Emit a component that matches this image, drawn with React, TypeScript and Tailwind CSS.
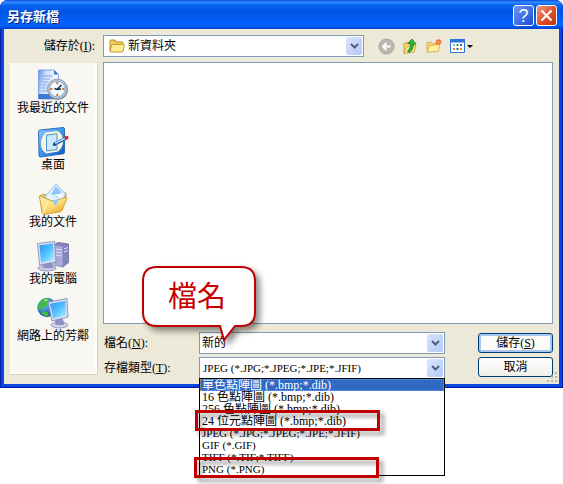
import { useState, type ReactNode } from "react";

const FILE_TYPES = [
  "單色點陣圖 (*.bmp;*.dib)",
  "16 色點陣圖 (*.bmp;*.dib)",
  "256 色點陣圖 (*.bmp;*.dib)",
  "24 位元點陣圖 (*.bmp;*.dib)",
  "JPEG (*.JPG;*.JPEG;*.JPE;*.JFIF)",
  "GIF (*.GIF)",
  "TIFF (*.TIF;*.TIFF)",
  "PNG (*.PNG)",
];

function RecentIcon() {
  return (
    <svg width="32" height="32" viewBox="0 0 32 32" aria-hidden="true">
      <defs>
        <linearGradient id="page" x1="0" y1="0" x2="1" y2="0.3">
          <stop offset="0" stopColor="#5f8fe8" />
          <stop offset="0.35" stopColor="#c9dcfb" />
          <stop offset="1" stopColor="#ffffff" />
        </linearGradient>
      </defs>
      <path d="M1.5 1H17l4.500 4.500V30H1.5z" fill="url(#page)" stroke="#6d96dc" strokeWidth="0.8" />
      <path d="M1.500 25h20v5h-20z" fill="#4478d6" />
      <path d="M17 1v4.500h4.500z" fill="#3f73cf" />
      <path d="M5 7h11M5 10h8M5 13h6M5 16h5M5 19h4M5 22h5" stroke="#86a9e2" />
      <circle cx="20.8" cy="20.8" r="10.2" fill="#7d8790" />
      <circle cx="20.3" cy="20" r="10" fill="#b6c2cc" stroke="#8797a5" strokeWidth="0.8" />
      <circle cx="20.3" cy="20" r="7.8" fill="#eefaff" stroke="#7fa6c2" strokeWidth="0.8" />
      <path d="M20.300 13v2.200M20.300 24.800V27M13.200 20h2.200M25.200 20h2.200" stroke="#f0642c" strokeWidth="1.800" />
      <path d="M24.500 16l-4.500 4.500M17.500 19.500l2.500 1 4-.5" fill="none" stroke="#12324f" strokeWidth="1.500" />
    </svg>
  );
}

function DesktopIcon() {
  return (
    <svg width="32" height="32" viewBox="0 0 32 32" aria-hidden="true">
      <defs>
        <linearGradient id="desk" x1="0" y1="0" x2="1" y2="1">
          <stop offset="0" stopColor="#8fcbff" />
          <stop offset="0.5" stopColor="#3f93ee" />
          <stop offset="1" stopColor="#0e55b8" />
        </linearGradient>
      </defs>
      <path d="M1.500 5.500q0-1.300 1.300-1.500L26 1.500q1.500 0 1.500 1.300v23.500q0 1.300-1.300 1.500L3.500 31Q2 31 2 29.500z" fill="url(#desk)" stroke="#1356b0" strokeWidth="0.8" />
      <path d="M8.500 6.500L20 5q5.500 2 6 9t-5 11.500L9.500 27.500Q4.500 25 4 18.500T8.500 6.500z" fill="#fdf6d2" />
      <path d="M9.500 9l10.500-1.300v15.800L9.500 25z" fill="#cfe9ff" stroke="#4a95e0" />
      <path d="M17 18.500l11.500-6" stroke="#2b6fbd" strokeWidth="3.200" />
      <path d="M18 17.300l10-5" stroke="#b7e2ff" strokeWidth="1.300" />
      <path d="M17 16l-1.500 3.800 3.500-.3z" fill="#153b72" />
      <circle cx="29.500" cy="11.800" r="2" fill="#d0301f" />
    </svg>
  );
}

function DocumentsIcon() {
  return (
    <svg width="32" height="32" viewBox="0 0 32 32" aria-hidden="true">
      <defs>
        <linearGradient id="docs" x1="0" y1="0" x2="0.7" y2="1">
          <stop offset="0" stopColor="#fff6b8" />
          <stop offset="0.6" stopColor="#fbdb73" />
          <stop offset="1" stopColor="#e5a932" />
        </linearGradient>
      </defs>
      <path d="M2.500 13l4-2 3 1.500L29 10v8L5.500 30z" fill="#f1cb60" stroke="#c18d27" strokeWidth="0.8" />
      <path d="M19 .8L28.500 11l-5 12-16-8.500z" fill="#e3f2ff" stroke="#78afe6" strokeWidth="0.8" />
      <path d="M19 3l5.500 6-3.500 6-7-4z" fill="#8fc5f8" />
      <path d="M16 12l9-1.500-1.500 4z" fill="#ffffff" />
      <path d="M2.500 13L11 16.500l5 1.500 12.800-3.500q1.200 0 .9 1.200L25 27.500q-.5 1-1.500 1.200L7 31.500q-1.500 0-2-1.500z" fill="url(#docs)" stroke="#cf982c" strokeWidth="0.8" />
      <path d="M15 17.700l7.500-2-4 7.500z" fill="#8fcdf6" />
      <path d="M6 30.500l5-13" stroke="#fff7cb" />
    </svg>
  );
}

function ComputerIcon() {
  return (
    <svg width="34" height="32" viewBox="0 0 34 32" aria-hidden="true">
      <defs>
        <linearGradient id="screen" x1="0" y1="0" x2="0.9" y2="1">
          <stop offset="0" stopColor="#2194f2" />
          <stop offset="0.55" stopColor="#57c4ff" />
          <stop offset="1" stopColor="#b4f1ff" />
        </linearGradient>
      </defs>
      <path d="M18 5l4-2.500L32.500 4v18.500L27 27l-9-2z" fill="#8584bf" stroke="#6868a3" strokeWidth="0.8" />
      <path d="M18 5l8.500 1.500V27L18 25z" fill="#a9a9d6" />
      <path d="M20 9l6 1M20 12l6 1M20 15l6 1M28 9l4-1.500M28 12l4-1.500" stroke="#dedff5" />
      <circle cx="29" cy="18.500" r="1" fill="#57b957" />
      <ellipse cx="11" cy="28" rx="9" ry="3" fill="#c9cae2" stroke="#8586b5" strokeWidth="0.8" />
      <path d="M8 22h8l1.500 6H7z" fill="#8e8fc2" />
      <path d="M1.500 3.500L18.500 1.500 20 22 3.500 25z" fill="#dcdef3" stroke="#8081b4" strokeWidth="0.8" />
      <path d="M3.500 5.200L17 3.500l1.300 16.500L5 22.500z" fill="url(#screen)" />
    </svg>
  );
}

function NetworkIcon() {
  return (
    <svg width="34" height="32" viewBox="0 0 34 32" aria-hidden="true">
      <defs>
        <radialGradient id="globe" cx="0.35" cy="0.3" r="0.75">
          <stop offset="0" stopColor="#6fc4ff" />
          <stop offset="1" stopColor="#0b46b4" />
        </radialGradient>
      </defs>
      <circle cx="11" cy="10.500" r="9.700" fill="url(#globe)" />
      <path d="M3 6q4-5.500 9-5l1.500 3-3 1.500 1 3-4 1.500L5.500 13 2 11.500zM6 14l5 1 2.500 4.500q-5 .5-8-3.500z" fill="#44bb3c" />
      <path d="M8 3l3-1 1 1.500-3 1z" fill="#a8e88f" />
      <ellipse cx="23.500" cy="28" rx="8.500" ry="3" fill="#d3d4e8" stroke="#8586b5" strokeWidth="0.8" />
      <path d="M19 22h8l1.500 6h-9z" fill="#8e8fc2" />
      <path d="M12 5l19-3.500 1 18.500-16 4z" fill="#dcdef3" stroke="#8081b4" strokeWidth="0.8" />
      <path d="M14 6.800L29.500 3.800l.8 14.800-13 3z" fill="url(#screen)" />
    </svg>
  );
}

const PLACES = [
  { label: "我最近的文件", icon: <RecentIcon /> },
  { label: "桌面", icon: <DesktopIcon /> },
  { label: "我的文件", icon: <DocumentsIcon /> },
  { label: "我的電腦", icon: <ComputerIcon /> },
  { label: "網路上的芳鄰", icon: <NetworkIcon /> },
];

function FolderIcon() {
  return (
    <svg width="16" height="14" viewBox="0 0 16 14" aria-hidden="true">
      <path d="M1 12V2q0-1 1-1h4l1.500 2H13q1 0 1 1v8z" fill="#f2cc5a" stroke="#b98a25" />
      <path d="M3.500 5.500h11q1 0 .8 1L14 12q-.3 1-1 1H2q-1 0-.8-1l1.300-5.500q.2-1 1-1z" fill="#fde98f" stroke="#c99a33" />
    </svg>
  );
}

function DropArrow() {
  return (
    <span className="flex h-[18px] w-4 items-center justify-center rounded-[2px] bg-gradient-to-br from-[#dbe5fd] to-[#b5c9f6]">
      <svg width="9" height="6" viewBox="0 0 9 6" aria-hidden="true">
        <path d="M1 1l3.500 3.500L8 1" fill="none" stroke="#4d6185" strokeWidth="2" />
      </svg>
    </span>
  );
}

function Key({ children }: { children: ReactNode }) {
  return (
    <>
      (<span className="underline">{children}</span>)
    </>
  );
}

function Toolbar() {
  return (
    <div className="flex w-[189px] items-center pl-[14px]">
      <button aria-label="上一頁" className="mr-2">
        <svg width="17" height="17" viewBox="0 0 17 17" aria-hidden="true">
          <circle cx="8.5" cy="8.5" r="7.500" fill="#b9b8b1" stroke="#a3a29b" />
          <path d="M12.500 8.500H5.500M8.500 5l-3.500 3.500L8.500 12" fill="none" stroke="#fff" strokeWidth="1.800" />
        </svg>
      </button>
      <button aria-label="往上一層" className="mr-2">
        <svg width="15" height="17" viewBox="0 0 15 17" aria-hidden="true">
          <path d="M1 15.500V5.500L4.500 4.500l1 1.500 5.500-1v8z" fill="#f6d878" stroke="#cfa23c" />
          <path d="M1 15.500l2.500-6.500 9.500-2-2 7z" fill="#fff0a2" stroke="#d3a842" />
          <path d="M5.500 14.500Q10.500 13 10.300 6H13L9 1 4.500 5.500h2.800q.7 5-2.800 7.500z" fill="#35b332" stroke="#1a7c22" strokeWidth="0.800" />
        </svg>
      </button>
      <button aria-label="建立新資料夾" className="mr-2">
        <svg width="16" height="16" viewBox="0 0 16 16" aria-hidden="true">
          <path d="M1 14V5l4-1 1.500 1.500H12V13z" fill="#f6d878" stroke="#dbb04b" />
          <path d="M1 14l2.500-6.500L14 6.500l-2 7z" fill="#fff0a2" stroke="#dfb551" />
          <path d="M12.500 1v6M9.500 4h6M10.500 2l4 4M14.500 2l-4 4" stroke="#ee6a33" strokeWidth="1.300" />
          <circle cx="12.500" cy="4" r="1.200" fill="#ffb054" />
        </svg>
      </button>
      <button aria-label="檢視功能表" className="flex items-center gap-[2px]">
        <svg width="15" height="14" viewBox="0 0 15 14" aria-hidden="true">
          <path d="M.5.500h14v13H.5z" fill="#fff" stroke="#2f74dc" />
          <path d="M0 0h15v3.500H0z" fill="#2f74dc" />
          <path d="M3 5h2v2H3z" fill="#9aa4b8" />
          <path d="M6.500 5h2v2h-2z" fill="#2fa34c" />
          <path d="M10 5h2v2h-2zM6.500 9h2v2h-2z" fill="#2f57cd" />
          <path d="M3 9h2v2H3z" fill="#e8763a" />
          <path d="M10 9h2v2h-2z" fill="#c09a2a" />
        </svg>
        <svg width="6" height="3" viewBox="0 0 6 3" aria-hidden="true">
          <path d="M0 0h6L3 3z" fill="#000" />
        </svg>
      </button>
    </div>
  );
}

function Callout() {
  return (
    <div className="pointer-events-none absolute top-[265px] left-[141px] h-20 w-[122px]">
      <svg
        className="absolute inset-0 drop-shadow-[4px_4px_3px_rgba(0,0,0,0.45)]"
        width="122"
        height="80"
        viewBox="0 0 122 80"
        aria-hidden="true"
      >
        <path
          d="M16 2h84q14 0 14 14v31q0 14-14 14h-6L83 75 79 61H16Q2 61 2 47V16Q2 2 16 2z"
          fill="#fff"
          stroke="#c00000"
          strokeWidth="2"
        />
      </svg>
      <p className="relative pt-[13px] pl-[27px] font-['Noto_Sans_CJK_TC',sans-serif] text-[29px] leading-[32px] text-[#c80000]">
        檔名
      </p>
    </div>
  );
}

function TypeList({ value, onPick }: { value: string; onPick: (type: string) => void }) {
  return (
    <div className="absolute top-[20px] -right-px -left-px">
      <ul role="listbox" aria-label="存檔類型" className="border border-black bg-white">
        {FILE_TYPES.map((type, i) => (
          <li
            key={type}
            role="option"
            aria-selected={type === value}
            onClick={() => onPick(type)}
            className={
              i === 0
                ? "h-3 overflow-hidden bg-[#316ac5] pl-[2px] leading-3 whitespace-nowrap text-white outline-1 -outline-offset-1 outline-dotted outline-[#ce953a]"
                : i < 4
                  ? "h-3 overflow-hidden pl-[2px] leading-3 whitespace-nowrap"
                  : "h-3 overflow-hidden pl-[2px] text-[11px] leading-3 whitespace-nowrap"
            }
          >
            {type}
          </li>
        ))}
      </ul>
      <div className="pointer-events-none absolute top-[32px] -left-1 h-[21px] w-[185px] border-3 border-[#c00000] drop-shadow-[4px_4px_2px_rgba(0,0,0,0.4)]" />
      <div className="pointer-events-none absolute top-[79px] -left-[5px] h-[21px] w-[185px] border-3 border-[#c00000] drop-shadow-[4px_4px_2px_rgba(0,0,0,0.4)]" />
    </div>
  );
}

export default function App() {
  const [name, setName] = useState("新的");
  const [type, setType] = useState(FILE_TYPES[4]);

  return (
    <div className="min-h-screen bg-white font-['Liberation_Serif','Noto_Sans_CJK_TC',serif] text-[12px] leading-4 text-black">
      <section className="relative rounded-t-lg bg-[#0a46e0] shadow-[inset_1px_-1px_0_#0019a8,inset_-1px_0_0_#0019a8]">
        <header className="flex h-[29px] items-center gap-[2px] rounded-t-lg bg-[linear-gradient(#0a4be0,#2f8cff_8%,#0560ee_18%,#0054e3_45%,#0362fb_75%,#0061fc_88%,#0040c8)] pt-[2px] pr-[6px] pl-[7px]">
          <h1 className="flex-1 font-['Noto_Sans_CJK_TC',sans-serif] text-[13px] font-bold text-white [text-shadow:1px_1px_0_#0a2a80]">
            另存新檔
          </h1>
          <button
            aria-label="說明"
            className="flex size-[21px] items-center justify-center rounded-[3px] border border-white bg-gradient-to-br from-[#6b98f6] to-[#1c48cf] font-['Liberation_Sans',sans-serif] text-[18px] leading-none text-white"
          >
            ?
          </button>
          <button
            aria-label="關閉"
            className="flex size-[21px] items-center justify-center rounded-[3px] border border-white bg-gradient-to-br from-[#f09a80] via-[#e0512c] to-[#bd3212]"
          >
            <svg width="13" height="13" viewBox="0 0 13 13" aria-hidden="true">
              <path d="M1.500 1.500l10 10M11.500 1.500l-10 10" stroke="#fff" strokeWidth="2.200" />
            </svg>
          </button>
        </header>

        <div className="px-1 pb-1">
          <div className="relative bg-[#ece9d8] px-[6px] pt-[6px] pb-[5px]">
            <div className="flex h-[22px] items-center">
              <label htmlFor="look-in" className="w-[93px] pr-2 text-right">
                儲存於<Key>I</Key>:
              </label>
              <div className="flex h-full min-w-0 flex-1 items-center border border-[#7f9db9] bg-white pr-px pl-[5px]">
                <FolderIcon />
                <select id="look-in" className="min-w-0 flex-1 appearance-none bg-white pl-[3px] outline-none">
                  <option>新資料夾</option>
                </select>
                <DropArrow />
              </div>
              <Toolbar />
            </div>

            <div className="mt-[5px] flex items-start gap-[6px]">
              <nav className="mt-px h-[311px] w-[87px] shrink-0 border-r-2 border-b-2 border-l border-[#fffefa] bg-[#f8f7f2] pt-[6px] shadow-[1px_1px_0_#d6d2c2]">
                <ul>
                  {PLACES.map((place) => (
                    <li key={place.label} className="h-[57px]">
                      <button className="flex w-full flex-col items-center whitespace-nowrap">
                        {place.icon}
                        <span className="leading-[14px]">{place.label}</span>
                      </button>
                    </li>
                  ))}
                </ul>
              </nav>

              <div className="min-w-0 flex-1">
                <div className="h-[262px] border border-[#7f9db9] bg-white" />

                <div className="mt-2 flex h-[22px] items-center">
                  <label htmlFor="file-name" className="w-24 pl-px">
                    檔名<Key>N</Key>:
                  </label>
                  <div className="flex h-full min-w-0 flex-1 items-center border border-[#7f9db9] bg-white pr-px pl-[2px]">
                    <input
                      id="file-name"
                      value={name}
                      onChange={(e) => setName(e.target.value)}
                      className="min-w-0 flex-1 outline-none"
                    />
                    <button aria-label="最近的檔名">
                      <DropArrow />
                    </button>
                  </div>
                  <button className="ml-[33px] h-5 w-[75px] rounded-[3px] border border-[#003c74] bg-[#fbfbf8] shadow-[inset_0_0_0_2px_#a9c5f2]">
                    儲存<Key>S</Key>
                  </button>
                </div>

                <div className="mt-[3px] flex h-[22px] items-center">
                  <label htmlFor="file-type" className="w-24 pl-px">
                    存檔類型<Key>T</Key>:
                  </label>
                  <div className="relative flex h-full min-w-0 flex-1 items-center border border-[#7f9db9] bg-white pr-px pl-[3px]">
                    <select
                      id="file-type"
                      value={type}
                      onChange={(e) => setType(e.target.value)}
                      className="min-w-0 flex-1 appearance-none bg-white text-[11px] outline-none"
                    >
                      {FILE_TYPES.map((t) => (
                        <option key={t}>{t}</option>
                      ))}
                    </select>
                    <DropArrow />
                    <TypeList value={type} onPick={setType} />
                  </div>
                  <button className="mb-[3px] ml-[33px] h-5 w-[75px] rounded-[3px] border border-[#003c74] bg-gradient-to-b from-white to-[#f0f0ea]">
                    取消
                  </button>
                </div>
              </div>
            </div>

            <svg className="absolute right-px bottom-px" width="11" height="11" viewBox="0 0 11 11" aria-hidden="true">
              <path d="M8 0h2v2H8zM4 4h2v2H4zM8 4h2v2H8zM0 8h2v2H0zM4 8h2v2H4zM8 8h2v2H8z" fill="#b8b4a2" />
            </svg>
          </div>
        </div>
        <Callout />
      </section>
    </div>
  );
}
